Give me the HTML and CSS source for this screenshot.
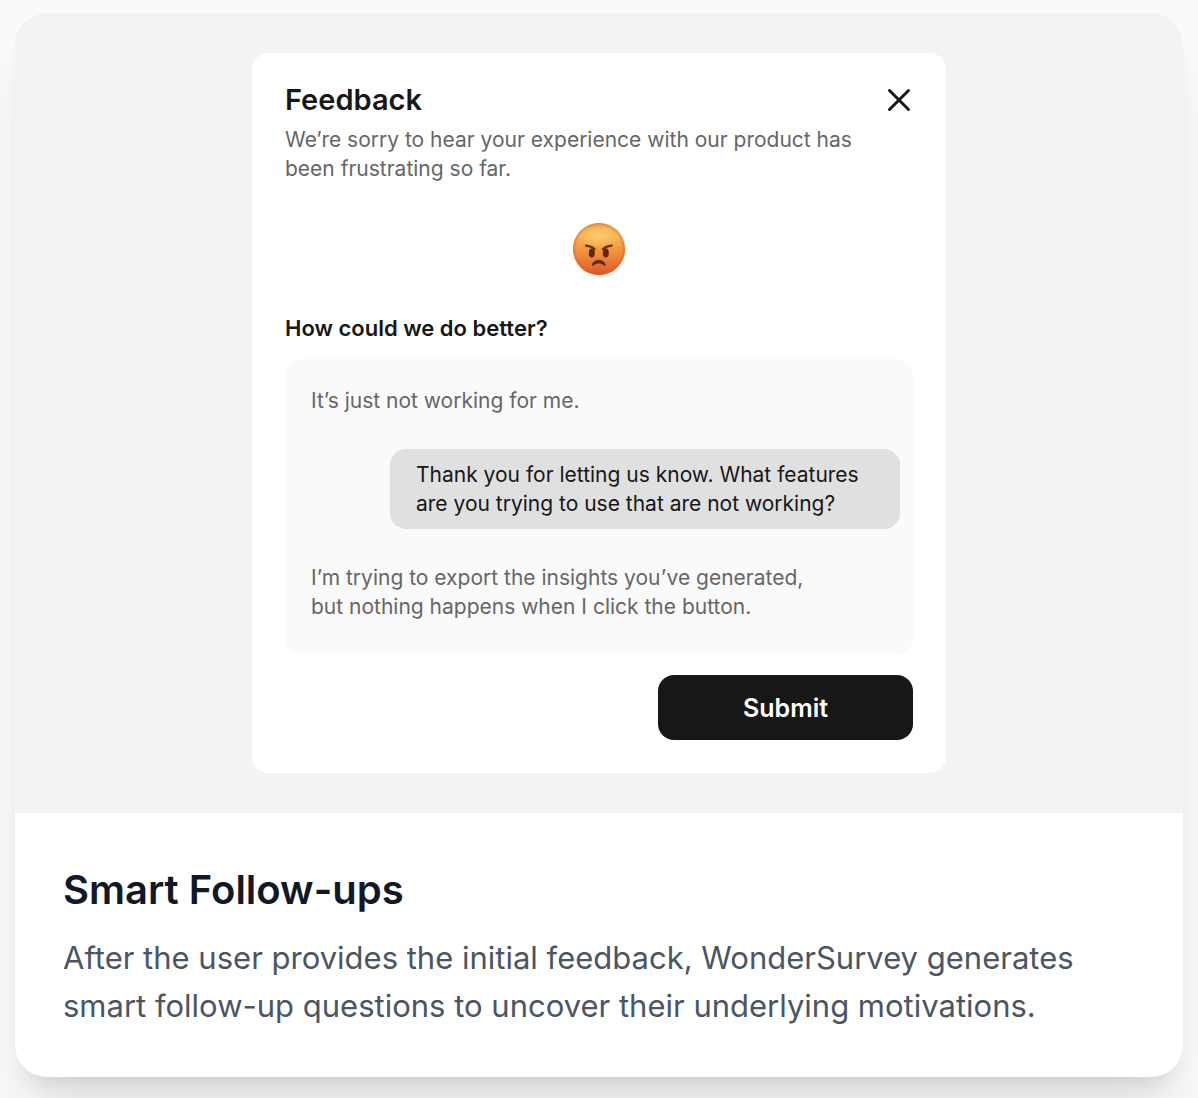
FILE: index.html
```html
<!DOCTYPE html>
<html lang="en">
<head>
<meta charset="utf-8">
<meta name="viewport" content="width=device-width, initial-scale=1">
<title>Smart Follow-ups</title>
<link rel="stylesheet" href="styles.css">
</head>
<body>
<article class="card">
  <div class="preview">
    <section class="dialog" aria-labelledby="dialog-title">
      <header class="dialog-header">
        <h3 class="dialog-title" id="dialog-title">Feedback</h3>
        <button class="close" type="button" aria-label="Close">
          <svg viewBox="0 0 28 28" width="28" height="28" fill="none" stroke="currentColor" stroke-width="3" stroke-linecap="round"><path d="M4.500 4.500l19 19M23.500 4.500l-19 19"/></svg>
        </button>
      </header>
      <p class="intro">We’re sorry to hear your experience with our product has<br>been frustrating so far.</p>
      <svg class="emoji" viewBox="0 0 52 52" width="52" height="52" role="img" aria-label="Angry face">
        <defs>
          <linearGradient id="skin" x1="0" y1="0" x2="0" y2="1">
            <stop offset="0" stop-color="#f2a848"/>
            <stop offset=".2" stop-color="#f7b955"/>
            <stop offset=".6" stop-color="#f08c3a"/>
            <stop offset="1" stop-color="#e0552c"/>
          </linearGradient>
          <radialGradient id="edge" cx=".5" cy=".5" r=".5">
            <stop offset=".86" stop-color="#d9581e" stop-opacity="0"/>
            <stop offset="1" stop-color="#d9581e" stop-opacity=".5"/>
          </radialGradient>
          <radialGradient id="shine" cx=".5" cy=".5" r=".5">
            <stop offset="0" stop-color="#ffd77c" stop-opacity=".65"/>
            <stop offset="1" stop-color="#ffd77c" stop-opacity="0"/>
          </radialGradient>
        </defs>
        <circle cx="26" cy="26" r="26" fill="url(#skin)"/>
        <circle cx="26" cy="26" r="26" fill="url(#edge)"/>
        <ellipse cx="26" cy="14" rx="22" ry="12" fill="url(#shine)"/>
        <g fill="#5e280c">
          <ellipse cx="18.800" cy="30" rx="3" ry="4.400"/>
          <ellipse cx="32.800" cy="30" rx="3" ry="4.400"/>
          <path d="M19 41.800C20.300 35.300 31.300 35.300 32.600 41.800C32.800 43.200 31.700 43 30.800 42.300C27.800 40 23.800 40 20.800 42.300C19.900 43 18.800 43.200 19 41.800Z"/>
        </g>
        <path d="M13 22.700C16 22.900 19.300 23.900 21.600 26.200M38.600 22.700C35.600 22.900 32.300 23.900 30 26.200" fill="none" stroke="#6b2f10" stroke-width="2.200" stroke-linecap="round"/>
      </svg>
      <h4 class="question">How could we do better?</h4>
      <div class="chat">
        <p class="message">It’s just not working for me.</p>
        <p class="message reply">Thank you for letting us know. What features<br>are you trying to use that are not working?</p>
        <p class="message">I’m trying to export the insights you’ve generated,<br>but nothing happens when I click the button.</p>
      </div>
      <button class="submit" type="button">Submit</button>
    </section>
  </div>
  <div class="caption">
    <h2 class="caption-title">Smart Follow-ups</h2>
    <p class="caption-text">After the user provides the initial feedback, WonderSurvey generates smart follow-up questions to uncover their underlying motivations.</p>
  </div>
</article>
</body>
</html>
```
FILE: styles.css
```css
* {
  box-sizing: border-box;
}

body {
  margin: 0;
  padding: 13px 15px 21px;
  background: #f9fafb;
  font-family: Inter, "Liberation Sans", sans-serif;
}

h2, h3, h4, p {
  margin: 0;
}

.card {
  border-radius: 32px;
  overflow: hidden;
  background: #fff;
  box-shadow: 0 40px 50px -10px rgba(0, 0, 0, 0.1), 0 16px 20px -12px rgba(0, 0, 0, 0.1);
}

.preview {
  display: flex;
  justify-content: center;
  padding: 40px;
  background: #f2f3f5;
}

.dialog {
  display: flex;
  flex-direction: column;
  width: 100%;
  max-width: 694px;
  padding: 28px 33px 33px;
  border-radius: 16px;
  background: #fff;
  color: #171717;
  font-size: 21px;
  line-height: 29px;
}

.dialog-header {
  display: flex;
  align-items: center;
  justify-content: space-between;
}

.dialog-title {
  font-size: 29px;
  line-height: 38px;
  font-weight: 600;
}

.close {
  display: flex;
  padding: 0;
  border: 0;
  background: none;
  color: inherit;
}

.intro {
  margin-top: 6px;
  color: #666;
}

.emoji {
  align-self: center;
  margin: 40px 0 39px;
}

.question {
  font-size: 22px;
  line-height: 29px;
  font-weight: 600;
}

.chat {
  display: flex;
  flex-direction: column;
  align-items: flex-start;
  gap: 34px;
  margin-top: 16px;
  padding: 27px 13px 34px 26px;
  border-radius: 16px;
  background: #fafafa;
}

.message {
  color: #666;
}

.reply {
  align-self: flex-end;
  width: 510px;
  max-width: 100%;
  padding: 11px 26px;
  border-radius: 16px;
  background: #e0e0e0;
  color: #171717;
}

.submit {
  align-self: flex-end;
  width: 255px;
  height: 65px;
  margin-top: 20px;
  border: 0;
  border-radius: 16px;
  background: #171717;
  color: #fff;
  font: 600 25px/32px Inter, "Liberation Sans", sans-serif;
}

.caption {
  padding: 49px 48px 47px;
}

.caption-title {
  color: #111827;
  font-size: 40px;
  line-height: 56px;
  font-weight: 600;
}

.caption-text {
  margin-top: 16px;
  color: #4b5563;
  font-size: 31px;
  line-height: 48px;
}
```
